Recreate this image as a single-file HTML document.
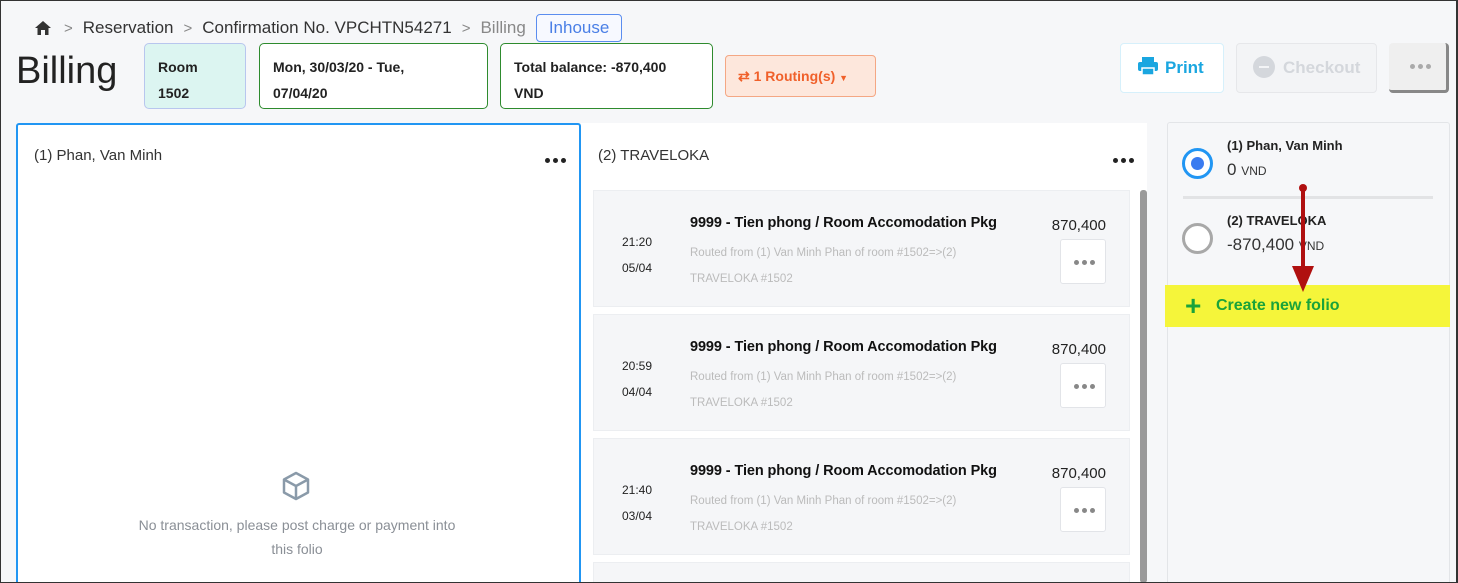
<!DOCTYPE html>
<html style="width:1458px;height:583px;overflow:hidden"><head><style>
*{box-sizing:border-box;margin:0;padding:0}
body{width:1458px;height:583px;overflow:hidden;background:#f6f7f9;font-family:"Liberation Sans",sans-serif;position:relative;color:#222}
.frame{position:absolute;left:0;top:0;width:1458px;height:583px;border:1px solid #333;border-right:2px solid #333;pointer-events:none;z-index:10}
.abs{position:absolute}
.crumb{top:14px;left:34px;font-size:17px;color:#333;display:flex;align-items:center;gap:0}
.crumb span{margin-right:10px}
.chev{color:#888;font-size:15px}
.inh{border:1px solid #5b8def;color:#4a7fe6;border-radius:4px;padding:3px 12px;font-size:17px;background:#f7f9ff}
.box{position:absolute;top:43px;height:66px;border-radius:5px;font-size:14px;font-weight:bold;padding:10px 13px;line-height:26px}
.card{position:absolute;left:593px;width:537px;height:117px;background:#f5f6f8;border:1px solid #eceef1}
.card .t{position:absolute;left:28px;top:38px;font-size:12px;line-height:26px;color:#222}
.card .d{position:absolute;left:96px;top:24px;font-size:14.5px;font-weight:bold;color:#111;letter-spacing:-0.1px}
.card .r{position:absolute;left:96px;top:49px;font-size:11.5px;color:#bbb;line-height:26px}
.card .a{position:absolute;right:23px;top:26px;font-size:15px;color:#222}
.card .b{position:absolute;right:23px;top:48px;width:46px;height:45px;background:#fff;border:1px solid #e2e4e8;border-radius:3px}
.dots{position:absolute;display:flex;gap:3px}
.dots i{display:block;width:5px;height:5px;border-radius:50%;background:#222}
.card .b .dots{left:13px;top:20px}
.card .b .dots i{background:#888}
</style></head><body>
<div class="frame"></div>
<div class="abs crumb"><svg width="18" height="16" viewBox="0 0 18 16" style="margin-right:12px"><path d="M9 1 L1 8 H3.5 V15 H7 V10 H11 V15 H14.5 V8 H17Z" fill="#333"/></svg><span class="chev">&gt;</span><span>Reservation</span><span class="chev">&gt;</span><span>Confirmation No. VPCHTN54271</span><span class="chev">&gt;</span><span style="color:#888">Billing</span><span class="inh">Inhouse</span></div>
<div class="abs" style="left:16px;top:50px;font-size:38px;color:#222">Billing</div>
<div class="box" style="left:144px;width:102px;background:#dcf5f1;border:1px solid #b8c6ee">Room<br>1502</div>
<div class="box" style="left:259px;width:229px;background:#fff;border:1px solid #2e8b2e">Mon, 30/03/20 - Tue,<br>07/04/20</div>
<div class="box" style="left:500px;width:213px;background:#fff;border:1px solid #2e8b2e">Total balance: -870,400<br>VND</div>
<div class="abs" style="left:725px;top:55px;width:151px;height:42px;background:#fde7dc;border:1px solid #f4a784;border-radius:4px;color:#f0602a;font-size:14px;font-weight:bold;line-height:40px;padding-left:12px">⇄ 1 Routing(s) <span style="font-size:9px">▼</span></div>
<div class="abs" style="left:1120px;top:43px;width:104px;height:50px;background:#fff;border:1px solid #d6f0fb;border-radius:4px;color:#1aa6e0;font-size:17px;font-weight:bold;line-height:48px;padding-left:16px"><svg width="22" height="20" viewBox="0 0 22 20" style="vertical-align:-3px;margin-right:6px"><rect x="5" y="1" width="12" height="5" fill="#1aa6e0"/><rect x="1" y="6" width="20" height="9" rx="2" fill="#1aa6e0"/><rect x="5" y="12" width="12" height="7" fill="#1aa6e0" stroke="#fff" stroke-width="1.5"/></svg>Print</div>
<div class="abs" style="left:1236px;top:43px;width:141px;height:50px;background:#f3f4f6;border:1px solid #e6e7ea;border-radius:4px;color:#d4d7dc;font-size:17px;font-weight:bold;line-height:48px;padding-left:16px"><span style="display:inline-block;width:22px;height:22px;border-radius:50%;background:#d4d7dc;vertical-align:-5px;margin-right:8px;position:relative"><span style="position:absolute;left:6px;top:10px;width:10px;height:2px;background:#f3f4f6"></span></span>Checkout</div>
<div class="abs" style="left:1389px;top:43px;width:60px;height:50px;background:#efefef;border-right:3px solid #888;border-bottom:3px solid #888;border-radius:4px"><div class="dots" style="left:21px;top:21px"><i style="background:#aaa"></i><i style="background:#aaa"></i><i style="background:#aaa"></i></div></div>

<div class="abs" style="left:16px;top:123px;width:565px;height:470px;background:#fff;border:2px solid #2196f3;border-radius:3px"></div>
<div class="abs" style="left:34px;top:147px;font-size:15px;color:#333">(1) Phan, Van Minh</div>
<div class="dots" style="left:545px;top:158px"><i></i><i></i><i></i></div>
<svg class="abs" style="left:281px;top:471px" width="30" height="30" viewBox="0 0 30 30"><path d="M15 2 L27 8.5 V21.5 L15 28 L3 21.5 V8.5Z M3 8.5 L15 15 L27 8.5 M15 15 V28" fill="none" stroke="#8a9aa9" stroke-width="2.5" stroke-linejoin="round"/></svg>
<div class="abs" style="left:97px;top:513px;width:400px;text-align:center;font-size:14px;color:#8a8f96;line-height:24px">No transaction, please post charge or payment into<br>this folio</div>

<div class="abs" style="left:581px;top:123px;width:566px;height:470px;background:#fff"></div>
<div class="abs" style="left:598px;top:147px;font-size:15px;color:#333">(2) TRAVELOKA</div>
<div class="dots" style="left:1113px;top:158px"><i></i><i></i><i></i></div>
<div class="abs" style="left:1140px;top:190px;width:7px;height:393px;background:#9a9a9a;border-radius:3px"></div>

<div class="card" style="top:190px"><div class="t">21:20<br>05/04</div><div class="d">9999 - Tien phong / Room Accomodation Pkg</div><div class="r">Routed from (1) Van Minh Phan of room #1502=&gt;(2)<br>TRAVELOKA #1502</div><div class="a">870,400</div><div class="b"><div class="dots"><i></i><i></i><i></i></div></div></div>
<div class="card" style="top:314px"><div class="t">20:59<br>04/04</div><div class="d">9999 - Tien phong / Room Accomodation Pkg</div><div class="r">Routed from (1) Van Minh Phan of room #1502=&gt;(2)<br>TRAVELOKA #1502</div><div class="a">870,400</div><div class="b"><div class="dots"><i></i><i></i><i></i></div></div></div>
<div class="card" style="top:438px"><div class="t">21:40<br>03/04</div><div class="d">9999 - Tien phong / Room Accomodation Pkg</div><div class="r">Routed from (1) Van Minh Phan of room #1502=&gt;(2)<br>TRAVELOKA #1502</div><div class="a">870,400</div><div class="b"><div class="dots"><i></i><i></i><i></i></div></div></div>
<div class="card" style="top:562px;height:21px"></div>

<div class="abs" style="left:1167px;top:122px;width:283px;height:470px;background:#f6f7f9;border:1px solid #e3e5e8;border-radius:3px"></div>
<div class="abs" style="left:1182px;top:148px;width:31px;height:31px;border-radius:50%;border:3px solid #2196f3;background:#fff"><div style="margin:6px;width:13px;height:13px;border-radius:50%;background:#3a7bf0"></div></div>
<div class="abs" style="left:1227px;top:138px;font-size:13px;font-weight:bold">(1) Phan, Van Minh</div>
<div class="abs" style="left:1227px;top:160px;font-size:17px;color:#333">0 <span style="font-size:12px">VND</span></div>
<div class="abs" style="left:1183px;top:196px;width:250px;height:3px;background:#e2e3e5"></div>
<div class="abs" style="left:1182px;top:223px;width:31px;height:31px;border-radius:50%;border:3px solid #a8a8a8;background:#fff"></div>
<div class="abs" style="left:1227px;top:213px;font-size:13px;font-weight:bold">(2) TRAVELOKA</div>
<div class="abs" style="left:1227px;top:235px;font-size:17px;color:#333">-870,400 <span style="font-size:12px">VND</span></div>
<div class="abs" style="left:1165px;top:285px;width:285px;height:42px;background:#f5f53a"></div>
<div class="abs" style="left:1185px;top:293px;font-size:28px;color:#1aa33a;line-height:26px;font-weight:bold">+</div>
<div class="abs" style="left:1216px;top:297px;font-size:16px;font-weight:bold;color:#1aa33a">Create new folio</div>
<svg class="abs" style="left:1288px;top:180px" width="28" height="120" viewBox="0 0 28 120"><circle cx="15" cy="8" r="4" fill="#b01010"/><rect x="13" y="8" width="4" height="80" fill="#b01010"/><path d="M4 86 H26 L15 112Z" fill="#b01010"/></svg>
</body></html>
